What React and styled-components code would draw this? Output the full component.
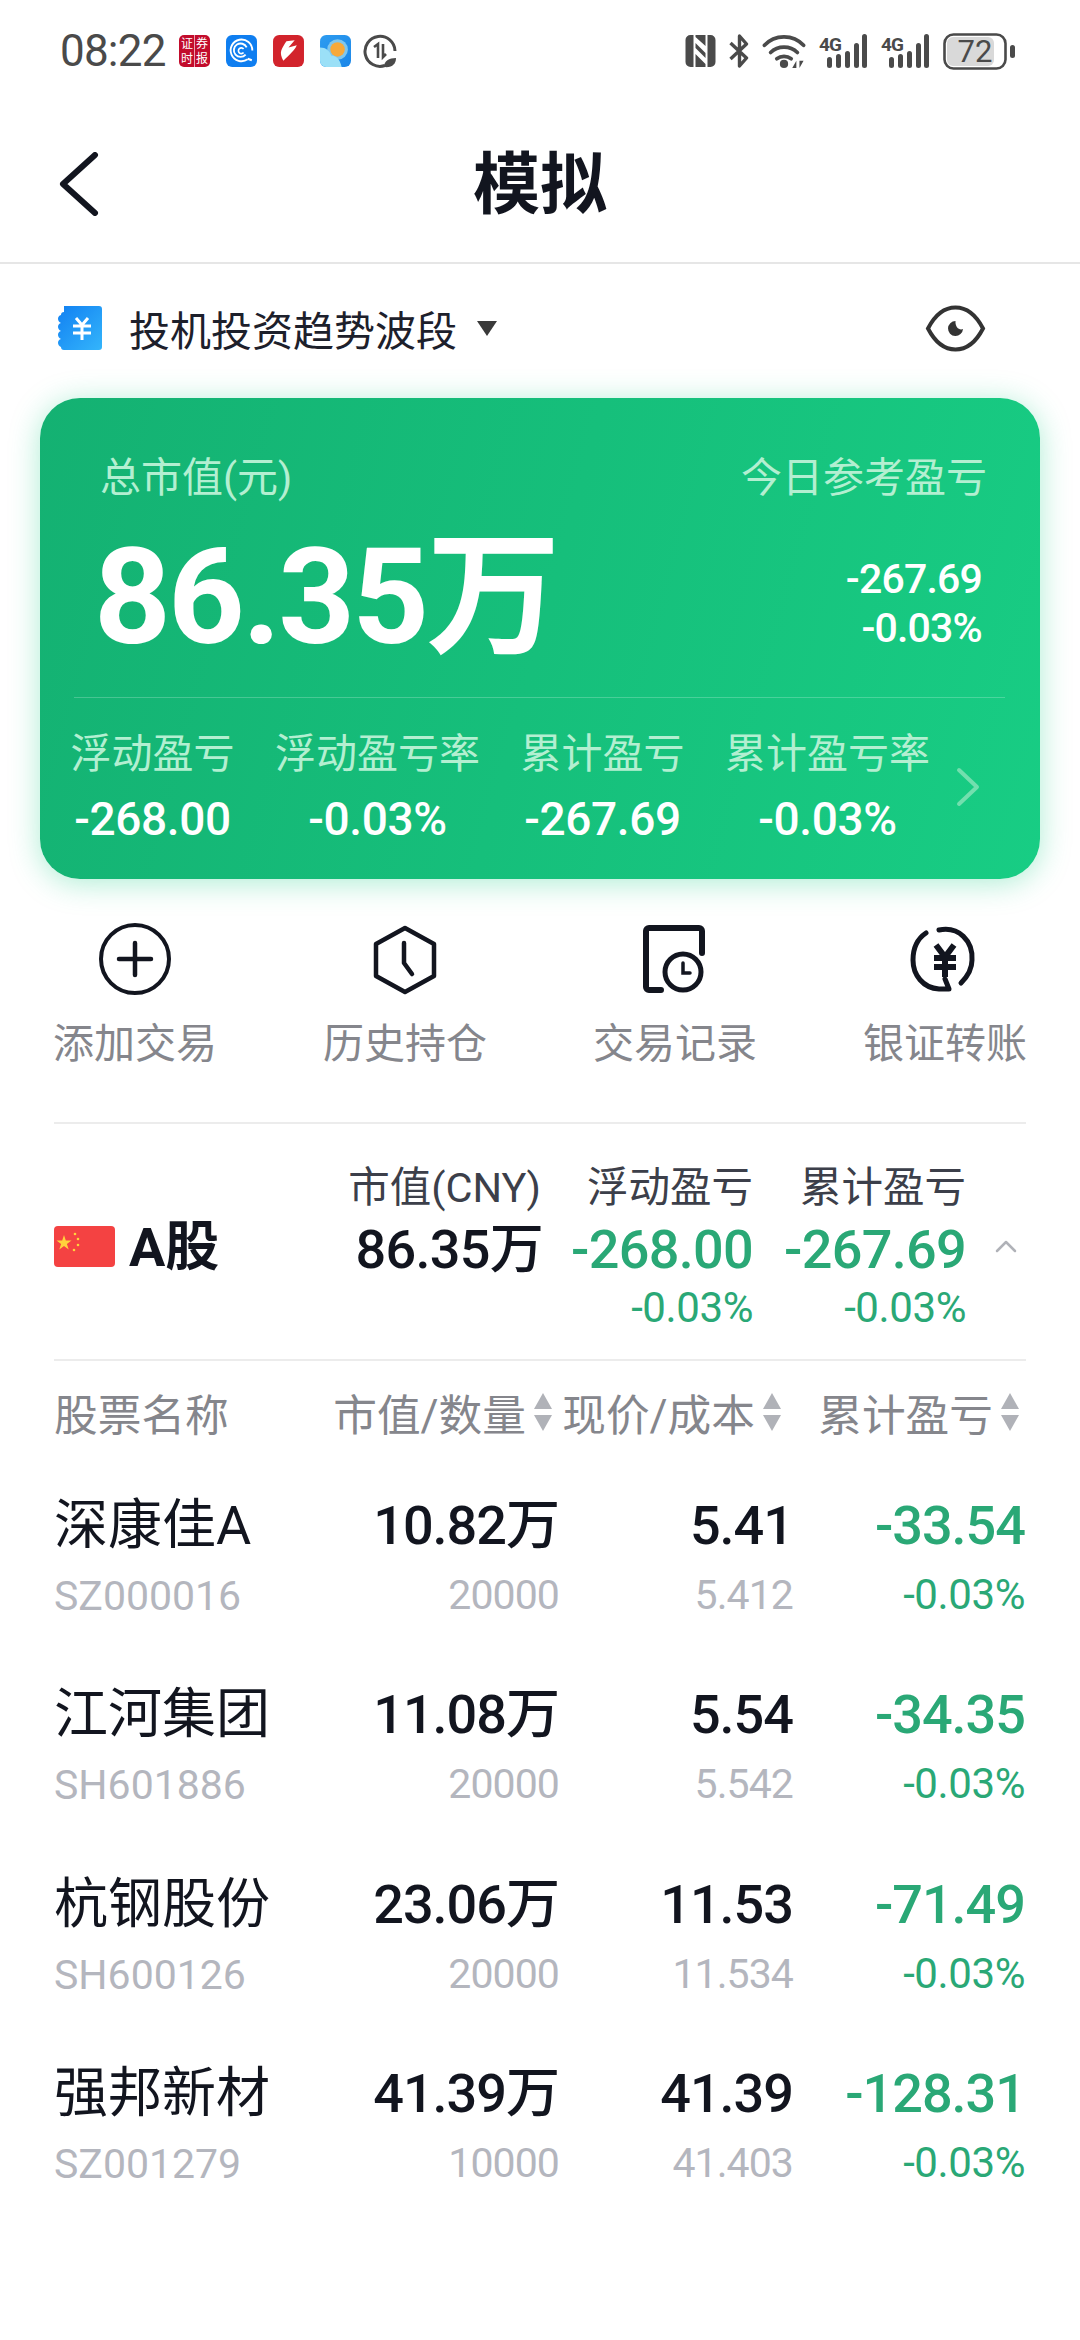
import React from 'react'
import styled, { createGlobalStyle } from 'styled-components'

const GlobalStyle = createGlobalStyle`
  html, body {
    margin: 0;
    padding: 0;
    background: #fff;
  }
  body {
    font-family: Roboto, "Noto Sans CJK SC", sans-serif;
    color: #12151f;
  }
`

const Page = styled.div`
  width: 1080px;
  height: 2340px;
  overflow: hidden;
  background: #fff;
`

/* status bar */
const StatusBar = styled.div`
  height: 102px;
  padding: 0 65px 0 60px;
  display: flex;
  align-items: center;
  justify-content: space-between;
  box-sizing: border-box;
`

const StatusGroup = styled.div`
  display: flex;
  align-items: center;
`

const Clock = styled.span`
  font-size: 44px;
  letter-spacing: -0.8px;
  color: #4a4a4a;
  margin-right: 14px;
  width: 105px;
`

const NotifySlot = styled.div`
  display: flex;
  margin-right: ${p => p.$gap}px;
`

const StatusSlot = styled.div`
  display: flex;
  margin-right: ${p => p.$gap}px;
`

/* nav */
const NavBar = styled.header`
  height: 160px;
  border-bottom: 2px solid #e6e6e6;
  display: flex;
  align-items: center;
  justify-content: center;
  position: relative;
`

const BackButton = styled.div`
  position: absolute;
  left: 59px;
  top: 50px;
  display: flex;
`

const Title = styled.h1`
  margin: -8px 0 0;
  font-size: 67px;
  font-weight: 700;
  color: #12151f;
`

/* account */
const AccountRow = styled.div`
  height: 134px;
  padding: 0 94px 6px 58px;
  display: flex;
  align-items: center;
  box-sizing: border-box;
`

const AccountName = styled.span`
  font-size: 41px;
  margin-left: 27px;
  color: #1d202b;
`

const Caret = styled.span`
  width: 0;
  height: 0;
  margin-left: 20px;
  margin-right: auto;
  border-left: 10px solid transparent;
  border-right: 10px solid transparent;
  border-top: 15px solid #3a3a3a;
`

/* summary card */
const Card = styled.section`
  margin: 0 40px;
  height: 481px;
  box-sizing: border-box;
  padding-top: 56px;
  border-radius: 40px;
  background: linear-gradient(105deg, #14b172 0%, #18cd84 100%);
  box-shadow: 0 4px 30px rgba(24, 205, 132, 0.36);
`

const CardTopRow = styled.div`
  display: flex;
  justify-content: space-between;
  padding: 0 53px 0 60px;
`

const CardLabel = styled.span`
  font-size: 41px;
  line-height: 48px;
  color: #b3efd1;
`

const CardMainRow = styled.div`
  margin-top: 26px;
  height: 140px;
  padding: 0 58px 0 54px;
  display: flex;
  align-items: center;
  justify-content: space-between;
`

const BigValue = styled.div`
  font-size: 134px;
  line-height: 140px;
  font-weight: 700;
  letter-spacing: -2.8px;
  color: #fff;
`

const TodayValues = styled.div`
  display: flex;
  flex-direction: column;
  align-items: flex-end;
  font-size: 41px;
  line-height: 49px;
  font-weight: 500;
  letter-spacing: -0.8px;
  color: #fff;
  margin-top: 12px;
`

const CardDivider = styled.div`
  margin: 29px 35px 0 34px;
  height: 1px;
  background: rgba(255, 255, 255, 0.22);
`

const StatRow = styled.div`
  margin-top: 32px;
  display: grid;
  grid-template-columns: repeat(4, 225px) 1fr;
  align-items: center;
`

const Stat = styled.div`
  display: flex;
  flex-direction: column;
  align-items: center;
`

const StatLabel = styled.span`
  font-size: 41px;
  line-height: 48px;
  color: #b3efd1;
`

const StatValue = styled.span`
  font-size: 46px;
  line-height: 48px;
  margin-top: 17px;
  font-weight: 500;
  letter-spacing: -0.4px;
  color: #fff;
`

const NextArrow = styled.div`
  display: flex;
  padding-left: 15px;
`

/* quick actions */
const Actions = styled.nav`
  margin-top: 44px;
  display: grid;
  grid-template-columns: repeat(4, 1fr);
`

const Action = styled.div`
  display: flex;
  flex-direction: column;
  align-items: center;
`

const ActionLabel = styled.span`
  margin-top: 25px;
  font-size: 41px;
  line-height: 48px;
  color: #85868c;
`

const Rule = styled.div`
  margin: ${p => p.$top || 0}px 54px 0;
  height: 2px;
  background: #ececec;
`

/* market summary */
const MarketHead = styled.section`
  height: 235px;
  box-sizing: border-box;
  padding: 40px 0 31px 54px;
  display: grid;
  grid-template-columns: 299px 190px 210px 213px 1fr;
  grid-template-rows: 48px 76px 40px;
`

const MarketName = styled.div`
  grid-row: 1 / 4;
  align-self: center;
  display: flex;
  align-items: center;
`

const FlagMark = styled.svg`
  display: block;
`

const MarketTitle = styled.span`
  margin: -8px 0 0 14px;
  font-size: 54px;
  font-weight: 700;
  color: #12151f;
`

const HeadCell = styled.span`
  justify-self: end;
  white-space: nowrap;
  font-size: 41.5px;
  line-height: 48px;
  margin-right: ${p => p.$inset || 0}px;
  color: #3c3f4a;
`

const HeadValue = styled.span`
  text-align: right;
  white-space: nowrap;
  font-size: 54px;
  line-height: 76px;
  font-weight: 500;
  letter-spacing: -0.7px;
  color: ${p => (p.$down ? '#2aa876' : '#12151f')};
`

const HeadPct = styled.span`
  grid-column: ${p => p.$col};
  text-align: right;
  font-size: 42px;
  line-height: 40px;
  letter-spacing: -0.4px;
  color: #2aa876;
`

const CollapseArrow = styled.div`
  grid-row: 1 / 4;
  grid-column: 5;
  align-self: center;
  display: flex;
  padding-left: 29px;
`

/* table */
const TableHead = styled.div`
  height: 105px;
  box-sizing: border-box;
  padding: 0 0 4px 54px;
  display: grid;
  grid-template-columns: 230px 268px 229px 238px;
  align-items: center;
`

const HeadLabel = styled.div`
  display: flex;
  align-items: center;
  justify-content: ${p => (p.$left ? 'flex-start' : 'flex-end')};
  gap: 8px;
  font-size: 43.7px;
  color: #85868c;
  white-space: nowrap;
`

const SortArrows = styled.span`
  display: flex;
  flex-direction: column;
  gap: 6px;
  flex: none;
`

const SortUp = styled.i`
  width: 0;
  height: 0;
  border-left: 9px solid transparent;
  border-right: 9px solid transparent;
  border-bottom: 16px solid #b0b2b8;
`

const SortDown = styled(SortUp)`
  border-bottom: 0;
  border-top: 16px solid #b0b2b8;
`

const StockRow = styled.div`
  height: 189.5px;
  padding: 0 54px;
  display: grid;
  grid-template-columns: 233px 272px 234px 232px;
  align-content: center;
`

const Cell = styled.div`
  display: flex;
  flex-direction: column;
  align-items: ${p => (p.$left ? 'flex-start' : 'flex-end')};
  white-space: nowrap;
`

const StockName = styled.span`
  font-size: 54px;
  line-height: 70px;
  color: #12151f;
`

const StockCode = styled.span`
  font-size: 41px;
  line-height: 70px;
  color: #b4b6be;
`

const MainNum = styled.span`
  font-size: 54px;
  line-height: 70px;
  font-weight: 500;
  letter-spacing: -1px;
  color: ${p => (p.$down ? '#2aa876' : '#12151f')};
`

const SubNum = styled.span`
  font-size: ${p => (p.$down ? 42 : 41)}px;
  line-height: 68px;
  letter-spacing: ${p => (p.$down ? -0.4 : -0.9)}px;
  color: ${p => (p.$down ? '#2aa876' : '#b4b6be')};
`

const stocks = [
  { name: '深康佳A', code: 'SZ000016', value: '10.82万', qty: '20000', price: '5.41', cost: '5.412', pnl: '-33.54' },
  { name: '江河集团', code: 'SH601886', value: '11.08万', qty: '20000', price: '5.54', cost: '5.542', pnl: '-34.35' },
  { name: '杭钢股份', code: 'SH600126', value: '23.06万', qty: '20000', price: '11.53', cost: '11.534', pnl: '-71.49' },
  { name: '强邦新材', code: 'SZ001279', value: '41.39万', qty: '10000', price: '41.39', cost: '41.403', pnl: '-128.31' },
]

const stats = [
  ['浮动盈亏', '-268.00'],
  ['浮动盈亏率', '-0.03%'],
  ['累计盈亏', '-267.69'],
  ['累计盈亏率', '-0.03%'],
]

const NewsIcon = () => (
  <svg width="31" height="32" viewBox="0 0 31 32">
    <rect width="31" height="32" rx="5" fill="#c20c2c" />
    <path d="M15.5 0v32" stroke="#f2c9cf" strokeWidth="0.8" />
    <g fill="#fff" fontSize="12" fontFamily="'Noto Sans CJK SC', sans-serif">
      <text x="2" y="13">证</text>
      <text x="17" y="13">券</text>
      <text x="2" y="28">时</text>
      <text x="17" y="28">报</text>
    </g>
  </svg>
)

const RingIcon = () => (
  <svg width="31" height="32" viewBox="0 0 30 31">
    <rect width="30" height="31" rx="6" fill="#0f7ef0" />
    <path d="M21 23.5A10.5 10.5 0 1 1 25.5 15" fill="none" stroke="#fff" strokeWidth="1.8" />
    <path d="M19 19a6.5 6.5 0 1 1 1-7" fill="none" stroke="#fff" strokeWidth="1.8" />
    <path d="M17 13.5a2.8 2.8 0 1 0 0 3.5" fill="none" stroke="#fff" strokeWidth="1.6" />
    <path d="M21 23l4 1.5" stroke="#fff" strokeWidth="2" />
  </svg>
)

const BoltIcon = () => (
  <svg width="31" height="32" viewBox="0 0 30 31">
    <rect width="30" height="31" rx="6" fill="#d2232c" />
    <path d="M13 6l8-1-6 7 8-2c-2 5-7 9-13 15-2-4-3-7-2-10s3-6 5-9z" fill="#fff" />
  </svg>
)

const WeatherIcon = () => (
  <svg width="31" height="32" viewBox="0 0 30 31">
    <defs>
      <linearGradient id="wxSky" x1="0" y1="0" x2="1" y2="1">
        <stop offset="0" stopColor="#2d9cf0" />
        <stop offset="1" stopColor="#1a86e8" />
      </linearGradient>
    </defs>
    <rect width="30" height="31" rx="6" fill="url(#wxSky)" />
    <circle cx="17" cy="14" r="10" fill="#7fc7ee" />
    <circle cx="17" cy="14" r="7" fill="#f7a93a" />
    <path d="M0 12c6 0 9 3 11 8 4 0 8 2 10 11H6a6 6 0 0 1-6-6z" fill="#9be0f7" />
  </svg>
)

const LeafCircleIcon = () => (
  <svg width="34" height="35" viewBox="0 0 34 35" fill="none" stroke="#4a4a4a">
    <path d="M22 31.5A15 15 0 1 1 32 17" strokeWidth="3" />
    <path d="M11 13l4-3v14M20 10v13l3-3" strokeWidth="2.6" />
    <path d="M21 33c0-6 5-9 12-9 0 6-4 10-12 9z" fill="#4a4a4a" stroke="none" />
  </svg>
)

const NfcIcon = () => (
  <svg width="31" height="32" viewBox="0 0 30 32">
    <path d="M8 0v32H5a5 5 0 0 1-5-5V5a5 5 0 0 1 5-5zM22 0h3a5 5 0 0 1 5 5v22a5 5 0 0 1-5 5h-3z" fill="#4a4a4a" />
    <path d="M10 0h10v11L10 2zM10 32V19l10 10v3z" fill="#4a4a4a" />
    <path d="M10 8l10 10v5L10 13z" fill="#4a4a4a" />
  </svg>
)

const BluetoothIcon = () => (
  <svg width="22" height="34" viewBox="0 0 21 34" fill="none" stroke="#4a4a4a" strokeWidth="3.4" strokeLinejoin="round">
    <path d="M2 9l16 15-7 8V2l7 8L2 25" />
  </svg>
)

const WifiIcon = () => (
  <svg width="44" height="34" viewBox="0 0 42 33" fill="none" stroke="#4a4a4a" strokeLinecap="round" strokeWidth="3.6">
    <path d="M2 11C12 0 30 0 40 11" />
    <path d="M8 18c7-7 19-7 26 0" />
    <path d="M14 24c4-3 10-3 14 0" />
    <circle cx="21" cy="29" r="4" fill="#4a4a4a" stroke="none" />
    <path d="M33 33v-7l-4 7zM36 26v7l4-7z" fill="#4a4a4a" stroke="none" />
  </svg>
)

const SignalIcon = () => (
  <svg width="50" height="34" viewBox="0 0 48 34">
    <text x="0" y="17" fontSize="19" fontWeight="700" fontFamily="Roboto, sans-serif" fill="#4a4a4a" letterSpacing="-0.8">4G</text>
    <g fill="#4a4a4a">
      <rect x="8" y="23" width="5" height="11" rx="2.5" />
      <rect x="17" y="20" width="5" height="14" rx="2.5" />
      <rect x="26" y="17" width="5" height="17" rx="2.5" />
      <rect x="35" y="9" width="5" height="25" rx="2.5" />
      <rect x="43" y="0" width="5" height="34" rx="2.5" />
    </g>
  </svg>
)

const BatteryIcon = () => (
  <svg width="72" height="37" viewBox="0 0 72 37">
    <rect x="4" y="4" width="47" height="29" rx="6" fill="#d9d9d9" />
    <rect x="1.5" y="1.5" width="61" height="34" rx="9" fill="none" stroke="#4a4a4a" strokeWidth="2.6" />
    <rect x="67" y="12" width="5" height="13" rx="2.5" fill="#4a4a4a" />
    <text x="32" y="29" textAnchor="middle" fontSize="31" fontFamily="Roboto, sans-serif" fill="#4a4a4a">72</text>
  </svg>
)

const BackIcon = () => (
  <svg width="40" height="64" viewBox="0 0 40 64" fill="none" stroke="#12151f" strokeWidth="6" strokeLinecap="round" strokeLinejoin="round">
    <path d="M36 3L4 32l32 29" />
  </svg>
)

const PassbookIcon = () => (
  <svg width="44" height="44" viewBox="0 0 44 44">
    <defs>
      <linearGradient id="bookFill" x1="0" y1="0" x2="1" y2="1">
        <stop offset="0" stopColor="#1180f2" />
        <stop offset="1" stopColor="#34b5fb" />
      </linearGradient>
    </defs>
    <path d="M6 0h35a3 3 0 0 1 3 3v38a3 3 0 0 1-3 3H6a3 3 0 0 1-3-3c-4-2-4-7 0-8-4-2-4-7 0-8-4-2-4-7 0-8-4-2-4-7 0-8a3 3 0 0 1 3-3z" fill="url(#bookFill)" />
    <path d="M18 12l6 7 6-7M15 20h18M15 27h18M24 19v15" fill="none" stroke="#fff" strokeWidth="3" />
  </svg>
)

const EyeIcon = () => (
  <svg width="61" height="47" viewBox="0 0 60 47" fill="none">
    <path d="M2.5 23.5C10 9 20 2.5 30 2.5S50 9 57.5 23.5C50 38 40 44.5 30 44.5S10 38 2.5 23.5z" stroke="#333" strokeWidth="4" />
    <path d="M30 16a7.5 7.5 0 1 0 7.5 8c-3.5 1.5-8-1.5-7.5-8z" fill="#333" />
  </svg>
)

const ChevronRight = () => (
  <svg width="26" height="40" viewBox="0 0 26 40" fill="none" stroke="#72dfae" strokeWidth="4" strokeLinecap="round" strokeLinejoin="round">
    <path d="M4 3l18 17L4 37" />
  </svg>
)

const AddIcon = () => (
  <svg width="72" height="72" viewBox="0 0 72 72" fill="none" stroke="#12151f" strokeLinecap="round">
    <circle cx="36" cy="36" r="34" strokeWidth="4" />
    <path d="M20 36h32M36 20v32" strokeWidth="4.5" />
  </svg>
)

const HistoryIcon = () => (
  <svg width="72" height="72" viewBox="0 0 72 72" fill="none" stroke="#12151f" strokeWidth="4.5" strokeLinecap="round" strokeLinejoin="round">
    <path d="M36 5l29 16v32L36 69 7 53V21z" />
    <path d="M35 20v20l8 11" />
  </svg>
)

const RecordIcon = () => (
  <svg width="72" height="72" viewBox="0 0 72 72" fill="none" stroke="#12151f" strokeLinecap="round">
    <path d="M63 30V8a3 3 0 0 0-3-3H10a3 3 0 0 0-3 3v56a3 3 0 0 0 3 3h12" strokeWidth="6" />
    <circle cx="44" cy="49" r="18" strokeWidth="5" />
    <path d="M44 40v10h7" strokeWidth="3.5" />
  </svg>
)

const TransferIcon = () => (
  <svg width="72" height="72" viewBox="0 0 72 72" fill="none" stroke="#12151f" strokeLinecap="round" strokeLinejoin="round">
    <path d="M30 7C50 3 64 18 63 37c0 9-5 17-11 23" strokeWidth="5" />
    <path d="M17 10C8 16 4 26 4 37c0 15 10 28 26 29h10l-4-10" strokeWidth="5" />
    <path d="M27 22l9 12 9-12M25 35h22M25 44h22M36 34v20" strokeWidth="6" strokeLinecap="butt" strokeLinejoin="miter" />
  </svg>
)

const ChinaFlag = () => (
  <FlagMark width="61" height="41" viewBox="0 0 61 41">
    <rect width="61" height="41" rx="4" fill="#f44242" />
    <path d="M10 9l1.8 5.5h5.7l-4.6 3.4 1.8 5.5-4.7-3.4-4.7 3.4 1.8-5.5-4.6-3.4h5.7z" fill="#ffd23c" />
    <g fill="#ffd23c">
      <circle cx="21" cy="8" r="1.3" />
      <circle cx="24" cy="13" r="1.3" />
      <circle cx="24" cy="19" r="1.3" />
      <circle cx="20" cy="24" r="1.3" />
    </g>
  </FlagMark>
)

const CollapseIcon = () => (
  <svg width="22" height="14" viewBox="0 0 22 14" fill="none" stroke="#b0b2b8" strokeWidth="2.5" strokeLinecap="round" strokeLinejoin="round">
    <path d="M2 12L11 3l9 9" />
  </svg>
)

const SortLabel = ({ children }) => (
  <HeadLabel>
    {children}
    <SortArrows>
      <SortUp />
      <SortDown />
    </SortArrows>
  </HeadLabel>
)

const App = () => {
  return (
    <Page>
      <GlobalStyle />
      <StatusBar>
        <StatusGroup>
          <Clock>08:22</Clock>
          <NotifySlot $gap={16}><NewsIcon /></NotifySlot>
          <NotifySlot $gap={16}><RingIcon /></NotifySlot>
          <NotifySlot $gap={16}><BoltIcon /></NotifySlot>
          <NotifySlot $gap={12}><WeatherIcon /></NotifySlot>
          <NotifySlot $gap={0}><LeafCircleIcon /></NotifySlot>
        </StatusGroup>
        <StatusGroup>
          <StatusSlot $gap={12}><NfcIcon /></StatusSlot>
          <StatusSlot $gap={12}><BluetoothIcon /></StatusSlot>
          <StatusSlot $gap={12}><WifiIcon /></StatusSlot>
          <StatusSlot $gap={12}><SignalIcon /></StatusSlot>
          <StatusSlot $gap={13}><SignalIcon /></StatusSlot>
          <StatusSlot $gap={0}><BatteryIcon /></StatusSlot>
        </StatusGroup>
      </StatusBar>

      <NavBar>
        <BackButton><BackIcon /></BackButton>
        <Title>模拟</Title>
      </NavBar>

      <AccountRow>
        <PassbookIcon />
        <AccountName>投机投资趋势波段</AccountName>
        <Caret />
        <EyeIcon />
      </AccountRow>

      <Card>
        <CardTopRow>
          <CardLabel>总市值(元)</CardLabel>
          <CardLabel>今日参考盈亏</CardLabel>
        </CardTopRow>
        <CardMainRow>
          <BigValue>86.35万</BigValue>
          <TodayValues>
            <span>-267.69</span>
            <span>-0.03%</span>
          </TodayValues>
        </CardMainRow>
        <CardDivider />
        <StatRow>
          {stats.map(([label, value]) => (
            <Stat key={label}>
              <StatLabel>{label}</StatLabel>
              <StatValue>{value}</StatValue>
            </Stat>
          ))}
          <NextArrow><ChevronRight /></NextArrow>
        </StatRow>
      </Card>

      <Actions>
        <Action><AddIcon /><ActionLabel>添加交易</ActionLabel></Action>
        <Action><HistoryIcon /><ActionLabel>历史持仓</ActionLabel></Action>
        <Action><RecordIcon /><ActionLabel>交易记录</ActionLabel></Action>
        <Action><TransferIcon /><ActionLabel>银证转账</ActionLabel></Action>
      </Actions>

      <Rule $top={54} />

      <MarketHead>
        <MarketName>
          <ChinaFlag />
          <MarketTitle>A股</MarketTitle>
        </MarketName>
        <HeadCell $inset={2}>市值(CNY)</HeadCell>
        <HeadCell>浮动盈亏</HeadCell>
        <HeadCell>累计盈亏</HeadCell>
        <CollapseArrow><CollapseIcon /></CollapseArrow>
        <HeadValue>86.35万</HeadValue>
        <HeadValue $down>-268.00</HeadValue>
        <HeadValue $down>-267.69</HeadValue>
        <HeadPct $col={3}>-0.03%</HeadPct>
        <HeadPct $col={4}>-0.03%</HeadPct>
      </MarketHead>

      <Rule />

      <TableHead>
        <HeadLabel $left>股票名称</HeadLabel>
        <SortLabel>市值/数量</SortLabel>
        <SortLabel>现价/成本</SortLabel>
        <SortLabel>累计盈亏</SortLabel>
      </TableHead>

      {stocks.map(s => (
        <StockRow key={s.code}>
          <Cell $left>
            <StockName>{s.name}</StockName>
            <StockCode>{s.code}</StockCode>
          </Cell>
          <Cell>
            <MainNum>{s.value}</MainNum>
            <SubNum>{s.qty}</SubNum>
          </Cell>
          <Cell>
            <MainNum>{s.price}</MainNum>
            <SubNum>{s.cost}</SubNum>
          </Cell>
          <Cell>
            <MainNum $down>{s.pnl}</MainNum>
            <SubNum $down>-0.03%</SubNum>
          </Cell>
        </StockRow>
      ))}
    </Page>
  )
}

export default App
